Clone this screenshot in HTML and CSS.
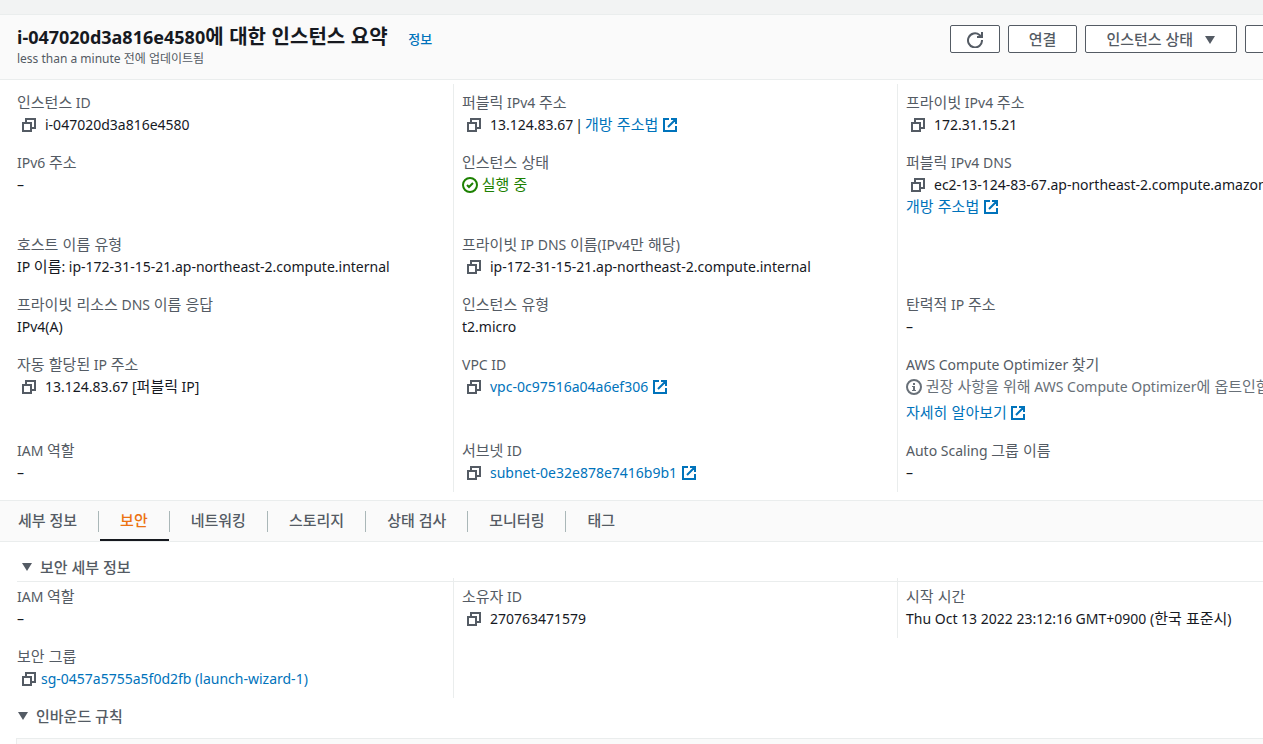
FILE: index.html
```html
<!DOCTYPE html>
<html lang="ko">
<head>
<meta charset="utf-8">
<title>인스턴스 요약</title>
<link rel="stylesheet" href="styles.css">
</head>
<body>
<svg class="sprite" aria-hidden="true">
  <symbol id="copy" viewBox="0 0 16 16"><path d="M2 6h8v8H2zM5 6V2h9v9h-4" fill="none" stroke="currentColor" stroke-width="2"/></symbol>
  <symbol id="external" viewBox="0 0 16 16"><path d="M7 2H2v12h12V9M9 2h5v5M14 2L6 10" fill="none" stroke="currentColor" stroke-width="2"/></symbol>
  <symbol id="success" viewBox="0 0 16 16"><circle cx="8" cy="8" r="7" fill="none" stroke="currentColor" stroke-width="2"/><path d="M5 8l2 2 4-4" fill="none" stroke="currentColor" stroke-width="2"/></symbol>
  <symbol id="info" viewBox="0 0 16 16"><circle cx="8" cy="8" r="7" fill="none" stroke="currentColor" stroke-width="2"/><path d="M7 4h2v2H7zM6 7h3v4h1v1H6v-1h1V8H6z" fill="currentColor"/></symbol>
  <symbol id="refresh" viewBox="0 0 16 16"><path d="M15 8A7 7 0 1 1 12.500 3L14 4.500" fill="none" stroke="currentColor" stroke-width="2"/><path d="M15 0v5H10" fill="none" stroke="currentColor" stroke-width="2"/></symbol>
  <symbol id="caret" viewBox="0 0 12 10"><path d="M1 1h10L6 9z" fill="currentColor"/></symbol>
</svg>
<div class="strip"></div>
<header class="header">
  <div class="heading">
    <h1 class="title">i-047020d3a816e4580<span class="ko">에 대한 인스턴스 요약</span> <a class="info-link" href="#">정보</a></h1>
    <p class="updated">less than a minute 전에 업데이트됨</p>
  </div>
  <div class="actions">
    <button class="btn btn-icon" aria-label="새로 고침"><svg class="icon icon-refresh"><use href="#refresh"/></svg></button>
    <button class="btn">연결</button>
    <button class="btn">인스턴스 상태 <svg class="icon icon-caret"><use href="#caret"/></svg></button>
    <button class="btn btn-menu" aria-label="작업"></button>
  </div>
</header>
<dl class="details">
  <div class="cell"><dt><span class="ko">인스턴스</span> ID</dt><dd><button class="copy" aria-label="복사"><svg class="icon"><use href="#copy"/></svg></button>i-047020d3a816e4580</dd></div>
  <div class="cell"><dt><span class="ko">퍼블릭</span> IPv4 <span class="ko">주소</span></dt><dd><button class="copy" aria-label="복사"><svg class="icon"><use href="#copy"/></svg></button>13.124.83.67<span class="sep">|</span><a href="#"><span class="ko">개방 주소법</span> <svg class="icon"><use href="#external"/></svg></a></dd></div>
  <div class="cell"><dt><span class="ko">프라이빗</span> IPv4 <span class="ko">주소</span></dt><dd><button class="copy" aria-label="복사"><svg class="icon"><use href="#copy"/></svg></button>172.31.15.21</dd></div>

  <div class="cell"><dt>IPv6 <span class="ko">주소</span></dt><dd>–</dd></div>
  <div class="cell"><dt class="ko">인스턴스 상태</dt><dd class="running"><svg class="icon"><use href="#success"/></svg> <span class="ko">실행 중</span></dd></div>
  <div class="cell"><dt><span class="ko">퍼블릭</span> IPv4 DNS</dt><dd><button class="copy" aria-label="복사"><svg class="icon"><use href="#copy"/></svg></button>ec2-13-124-83-67.ap-northeast-2.compute.amazonaws.com</dd><dd><a href="#"><span class="ko">개방 주소법</span> <svg class="icon"><use href="#external"/></svg></a></dd></div>

  <div class="cell"><dt class="ko">호스트 이름 유형</dt><dd>IP <span class="ko">이름</span>: ip-172-31-15-21.ap-northeast-2.compute.internal</dd></div>
  <div class="cell"><dt><span class="ko">프라이빗</span> IP DNS <span class="ko">이름</span>(IPv4<span class="ko">만 해당</span>)</dt><dd><button class="copy" aria-label="복사"><svg class="icon"><use href="#copy"/></svg></button>ip-172-31-15-21.ap-northeast-2.compute.internal</dd></div>
  <div class="cell"></div>

  <div class="cell"><dt><span class="ko">프라이빗 리소스</span> DNS <span class="ko">이름 응답</span></dt><dd>IPv4(A)</dd></div>
  <div class="cell"><dt class="ko">인스턴스 유형</dt><dd>t2.micro</dd></div>
  <div class="cell"><dt><span class="ko">탄력적</span> IP <span class="ko">주소</span></dt><dd>–</dd></div>

  <div class="cell"><dt><span class="ko">자동 할당된</span> IP <span class="ko">주소</span></dt><dd><button class="copy" aria-label="복사"><svg class="icon"><use href="#copy"/></svg></button>13.124.83.67 [<span class="ko">퍼블릭</span> IP]</dd></div>
  <div class="cell"><dt>VPC ID</dt><dd><button class="copy" aria-label="복사"><svg class="icon"><use href="#copy"/></svg></button><a href="#">vpc-0c97516a04a6ef306 <svg class="icon"><use href="#external"/></svg></a></dd></div>
  <div class="cell"><dt>AWS Compute Optimizer <span class="ko">찾기</span></dt><dd class="muted"><svg class="icon"><use href="#info"/></svg> <span class="ko">권장 사항을 위해</span> AWS Compute Optimizer<span class="ko">에 옵트인합니다.</span></dd><dd class="more"><a href="#"><span class="ko">자세히 알아보기</span> <svg class="icon"><use href="#external"/></svg></a></dd></div>

  <div class="cell"><dt>IAM <span class="ko">역할</span></dt><dd>–</dd></div>
  <div class="cell"><dt><span class="ko">서브넷</span> ID</dt><dd><button class="copy" aria-label="복사"><svg class="icon"><use href="#copy"/></svg></button><a href="#">subnet-0e32e878e7416b9b1 <svg class="icon"><use href="#external"/></svg></a></dd></div>
  <div class="cell"><dt>Auto Scaling <span class="ko">그룹 이름</span></dt><dd>–</dd></div>
</dl>
<nav class="tabs">
  <a class="tab" href="#">세부 정보</a>
  <a class="tab active" href="#" aria-current="page">보안</a>
  <a class="tab" href="#">네트워킹</a>
  <a class="tab" href="#">스토리지</a>
  <a class="tab" href="#">상태 검사</a>
  <a class="tab" href="#">모니터링</a>
  <a class="tab" href="#">태그</a>
</nav>
<section class="security">
  <h2 class="section-title underlined"><button class="toggle"><svg class="icon icon-caret"><use href="#caret"/></svg>보안 세부 정보</button></h2>
  <dl class="details security-details">
    <div class="cell"><dt>IAM <span class="ko">역할</span></dt><dd>–</dd></div>
    <div class="cell"><dt><span class="ko">소유자</span> ID</dt><dd><button class="copy" aria-label="복사"><svg class="icon"><use href="#copy"/></svg></button>270763471579</dd></div>
    <div class="cell"><dt class="ko">시작 시간</dt><dd>Thu Oct 13 2022 23:12:16 GMT+0900 (<span class="ko">한국 표준시</span>)</dd></div>
    <div class="cell"><dt class="ko">보안 그룹</dt><dd class="tight"><button class="copy" aria-label="복사"><svg class="icon"><use href="#copy"/></svg></button><a href="#">sg-0457a5755a5f0d2fb (launch-wizard-1)</a></dd></div>
    <div class="cell"></div>
  </dl>
  <h2 class="section-title"><button class="toggle"><svg class="icon icon-caret"><use href="#caret"/></svg>인바운드 규칙</button></h2>
  <div class="rules"></div>
</section>
</body>
</html>
```
FILE: styles.css
```css
* { box-sizing: border-box; }
body {
  margin: 0;
  overflow: hidden;
  height: 100vh;
  background: #fff;
  color: #16191f;
  font: 14px/22px "Noto Sans", "Noto Sans CJK KR", sans-serif;
}
h1, h2, p, dl, dd { margin: 0; }
a { color: #0073bb; text-decoration: none; }
button { font: inherit; color: inherit; background: none; border: 0; padding: 0; }
.sprite { position: absolute; width: 0; height: 0; }
.icon { width: 16px; height: 16px; vertical-align: -3px; flex: none; }
.icon-caret { width: 12px; height: 10px; vertical-align: 0; }
.icon-refresh { width: 16px; height: 16px; }

/* Hangul is set one step larger than the Latin text beside it. */
.ko { font-family: "Noto Sans CJK KR", sans-serif; font-size: 15px; line-height: 1; }
dt.ko { padding-bottom: 2px; line-height: 20px; }

.strip { height: 14px; background: #f2f3f3; }
.header {
  display: flex;
  justify-content: space-between;
  width: calc(100% + 78px);
  padding: 10px 17px 10px;
  background: #fafafa;
  border-top: 1px solid #eaeded;
  border-bottom: 1px solid #eaeded;
}
.title { font-size: 18px; line-height: 24px; font-weight: 700; }
.title .ko { font-size: 20px; }
.info-link { margin-left: 16px; font-size: 13px; line-height: 1; font-weight: 500; }
.updated { font-size: 12px; line-height: 20px; color: #545b64; }
.actions { display: flex; align-items: flex-start; gap: 8px; }
.btn {
  height: 28px;
  padding: 0 20px;
  border: 1px solid #545b64;
  border-radius: 2px;
  background: #fff;
  color: #545b64;
  font-size: 15px;
  line-height: 20px;
  font-weight: 500;
  white-space: nowrap;
}
.btn-icon { padding: 0 16px; }
.btn-menu { width: 79px; }
.btn .icon-caret { margin-left: 7px; }

.details {
  display: grid;
  grid-template-columns: repeat(3, 1fr);
  width: calc(100% + 78px);
  margin: 4px 0 8px;
  padding-left: 9px;
}
.cell { min-width: 0; min-height: 60px; padding: 8px; white-space: nowrap; }
.cell:not(:nth-child(3n + 1)) { border-left: 1px solid #eaeded; }
dt { color: #545b64; }
.copy { width: 16px; margin: 0 8px 0 4px; color: #545b64; }
.tight .copy { margin-right: 4px; }
.sep { margin: 0 2px; }
.running { color: #1d8102; }
.muted { color: #687078; }
.more { padding-top: 4px; }

.tabs {
  display: flex;
  height: 42px;
  background: #fafafa;
  border-top: 1px solid #eaeded;
  border-bottom: 1px solid #eaeded;
}
.tab {
  position: relative;
  padding: 8px 22px 10px 21px;
  color: #545b64;
  font-size: 15px;
  font-weight: 500;
}
.tab:first-child { padding-left: 18px; }
.tab:not(:last-child)::before {
  content: "";
  position: absolute;
  top: 10px;
  right: 0;
  height: 21px;
  border-right: 1px solid #aab7b8;
}
.tab.active { color: #ec7211; }
.tab.active::after {
  content: "";
  position: absolute;
  left: 1px;
  right: 1px;
  bottom: 0;
  height: 2px;
  background: #16191f;
}

.section-title { margin-left: 17px; font-size: 15px; color: #545b64; font-weight: 500; }
.toggle { display: flex; align-items: center; gap: 7px; }
.underlined { padding: 14px 4px 3px; border-bottom: 1px solid #eaeded; }
.security-details { margin: -4px 0 7px; }
.rules { height: 60px; margin: 11px 0 0 16px; background: #fafafa; border: 1px solid #eaeded; border-right: 0; }
```
